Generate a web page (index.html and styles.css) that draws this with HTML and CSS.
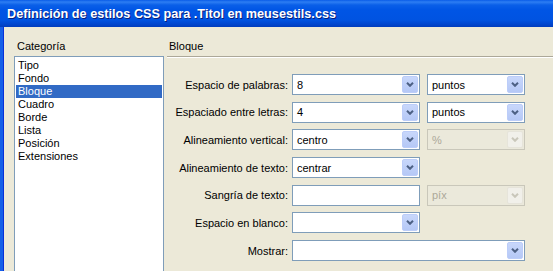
FILE: index.html
```html
<!DOCTYPE html>
<html lang="es">
<head>
<meta charset="utf-8">
<title>Definición de estilos CSS</title>
<link rel="stylesheet" href="styles.css">
</head>
<body>
<div class="window">
  <div class="titlebar"><span class="title">Definición de estilos CSS para .Titol en meusestils.css</span></div>
  <div class="body">
    <div class="cat">
      <div class="cat-label">Categoría</div>
      <ul class="list">
        <li>Tipo</li>
        <li>Fondo</li>
        <li class="sel">Bloque</li>
        <li>Cuadro</li>
        <li>Borde</li>
        <li>Lista</li>
        <li>Posición</li>
        <li>Extensiones</li>
      </ul>
    </div>
    <div class="panel">
      <div class="panel-head">Bloque</div>
      <div class="form">
        <div class="lbl">Espacio de palabras:</div>
        <div class="combo"><span class="val">8</span><span class="btn"><svg width="8" height="5" viewBox="0 0 8 5"><polyline points="1,0.8 4,3.8 7,0.8" fill="none" stroke="#4d6185" stroke-width="2"/></svg></span></div>
        <div class="combo"><span class="val">puntos</span><span class="btn"><svg width="8" height="5" viewBox="0 0 8 5"><polyline points="1,0.8 4,3.8 7,0.8" fill="none" stroke="#4d6185" stroke-width="2"/></svg></span></div>

        <div class="lbl">Espaciado entre letras:</div>
        <div class="combo"><span class="val">4</span><span class="btn"><svg width="8" height="5" viewBox="0 0 8 5"><polyline points="1,0.8 4,3.8 7,0.8" fill="none" stroke="#4d6185" stroke-width="2"/></svg></span></div>
        <div class="combo"><span class="val">puntos</span><span class="btn"><svg width="8" height="5" viewBox="0 0 8 5"><polyline points="1,0.8 4,3.8 7,0.8" fill="none" stroke="#4d6185" stroke-width="2"/></svg></span></div>

        <div class="lbl">Alineamiento vertical:</div>
        <div class="combo"><span class="val">centro</span><span class="btn"><svg width="8" height="5" viewBox="0 0 8 5"><polyline points="1,0.8 4,3.8 7,0.8" fill="none" stroke="#4d6185" stroke-width="2"/></svg></span></div>
        <div class="combo disabled"><span class="val">%</span><span class="btn"><svg width="8" height="5" viewBox="0 0 8 5"><polyline points="1,0.8 4,3.8 7,0.8" fill="none" stroke="#c9c7ba" stroke-width="2"/></svg></span></div>

        <div class="lbl">Alineamiento de texto:</div>
        <div class="combo"><span class="val">centrar</span><span class="btn"><svg width="8" height="5" viewBox="0 0 8 5"><polyline points="1,0.8 4,3.8 7,0.8" fill="none" stroke="#4d6185" stroke-width="2"/></svg></span></div>
        <div class="empty"></div>

        <div class="lbl">Sangría de texto:</div>
        <div class="field"></div>
        <div class="combo disabled"><span class="val">píx</span><span class="btn"><svg width="8" height="5" viewBox="0 0 8 5"><polyline points="1,0.8 4,3.8 7,0.8" fill="none" stroke="#c9c7ba" stroke-width="2"/></svg></span></div>

        <div class="lbl">Espacio en blanco:</div>
        <div class="combo"><span class="val"></span><span class="btn"><svg width="8" height="5" viewBox="0 0 8 5"><polyline points="1,0.8 4,3.8 7,0.8" fill="none" stroke="#4d6185" stroke-width="2"/></svg></span></div>
        <div class="empty"></div>

        <div class="lbl">Mostrar:</div>
        <div class="combo wide"><span class="val"></span><span class="btn"><svg width="8" height="5" viewBox="0 0 8 5"><polyline points="1,0.8 4,3.8 7,0.8" fill="none" stroke="#4d6185" stroke-width="2"/></svg></span></div>
      </div>
    </div>
  </div>
</div>
</body>
</html>
```

FILE: styles.css
```css
* { box-sizing: border-box; }
html, body { margin: 0; padding: 0; }
body {
  width: 553px;
  height: 271px;
  overflow: hidden;
  background: #ece9d8;
  font-family: "Liberation Sans", Arial, sans-serif;
  font-size: 11px;
  color: #000;
}
.window {
  width: 553px;
  height: 271px;
  display: flex;
  flex-direction: column;
  overflow: hidden;
}
.titlebar {
  height: 27px;
  flex: none;
  display: flex;
  align-items: center;
  padding-left: 7px;
  background: linear-gradient(#0a5ce8 0, #2d7ef3 2px, #0a5fe8 5px, #0055e5 10px, #0053e1 20px, #0046cf 24px, #003cbc 27px);
}
.title {
  color: #fff;
  font-weight: bold;
  font-size: 12.7px;
  text-shadow: 1px 1px 0 #0a1e7a;
  white-space: nowrap;
}
.body {
  flex: 1;
  display: flex;
  padding-left: 11px;
  padding-top: 13px;
  border-left: 3px solid #1660e8;
  box-shadow: inset 1px 0 0 #0831d9;
  gap: 3px;
  background: #ece9d8;
}
.cat {
  width: 150px;
  flex: none;
  display: flex;
  flex-direction: column;
}
.cat-label {
  height: 13px;
  line-height: 13px;
  padding-left: 3px;
  margin-bottom: 3px;
}
.list {
  list-style: none;
  margin: 0;
  padding: 1px;
  border: 1px solid #7f9db9;
  background: #fff;
  height: 260px;
}
.list li {
  height: 13px;
  line-height: 13px;
  padding-left: 2px;
  white-space: nowrap;
}
.list li:first-child { margin-top: 1px; }
.list .sel {
  background: #316ac5;
  color: #fff;
}
.panel {
  flex: 1;
  display: flex;
  flex-direction: column;
}
.panel-head {
  height: 17px;
  line-height: 13px;
  padding-left: 2px;
  border-bottom: 1px solid #aca899;
  box-shadow: 0 1px 0 #fff;
}
.form {
  margin-top: 17px;
  display: grid;
  grid-template-columns: 125px 135px 98px;
  grid-auto-rows: 21px;
  row-gap: 6.7px;
}
.lbl {
  text-align: right;
  padding-right: 4px;
  display: flex;
  align-items: center;
  justify-content: flex-end;
  white-space: nowrap;
}
.combo, .field {
  width: 128px;
  height: 21px;
  border: 1px solid #7f9db9;
  background: #fff;
  display: flex;
  align-items: center;
}
.combo:nth-child(3n) { width: 98px; }
.combo.wide { width: 233px; grid-column: 2 / 4; }
.val {
  flex: 1;
  padding-left: 4px;
  white-space: nowrap;
}
.btn {
  width: 16px;
  height: 17px;
  margin-right: 1px;
  border: 1px solid #bccdf9;
  border-radius: 2px;
  background: linear-gradient(#c8d7fb, #b5c8f6);
  display: flex;
  align-items: center;
  justify-content: center;
}
.combo.disabled {
  border-color: #c9c7ba;
  background: #ebe9db;
  color: #aca899;
}
.combo.disabled .btn {
  border-color: #e6e4da;
  background: #f1f0ea;
}
```
